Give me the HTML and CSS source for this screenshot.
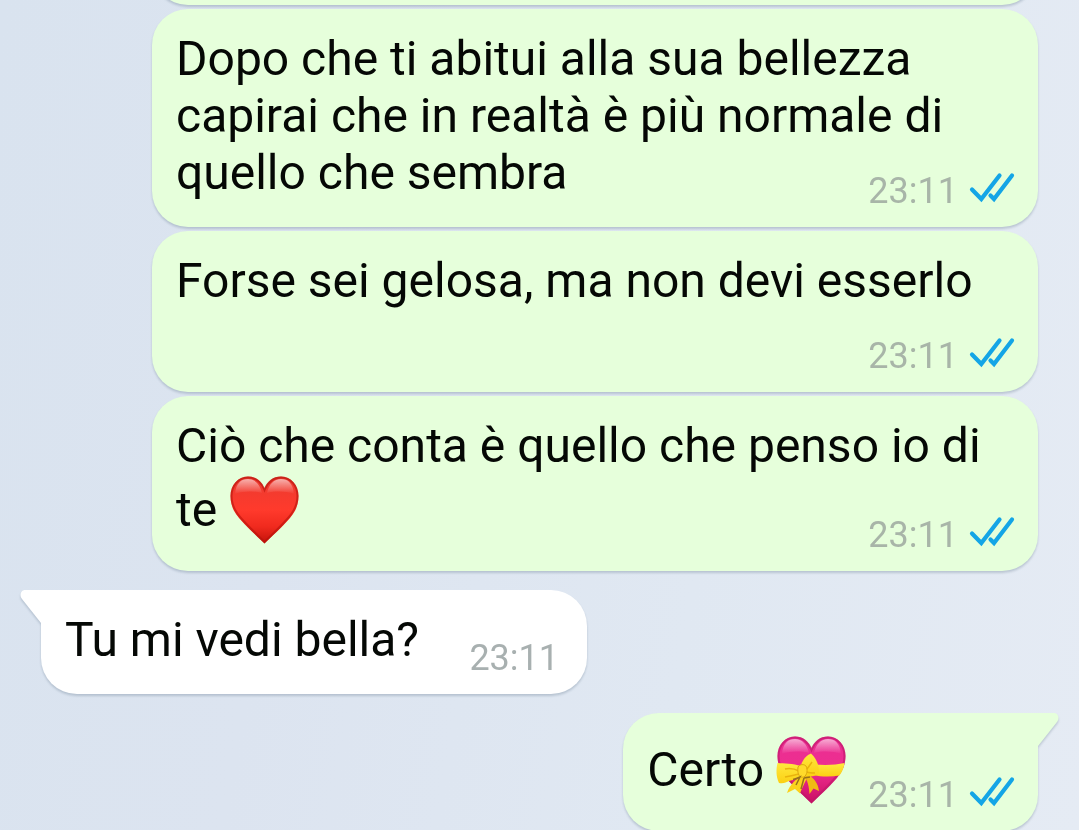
FILE: index.html
```html
<!DOCTYPE html>
<html lang="it">
  <head>
    <meta charset="UTF-8" />
    <meta name="viewport" content="width=device-width, initial-scale=1.0" />
    <title>Chat</title>
    <link rel="stylesheet" href="styles.css">
  </head>
  <body>
    <!-- shared shapes -->
    <svg class="defs" aria-hidden="true">
      <symbol id="ticks" viewBox="0 0 46 34">
        <path d="M3 18.5 L12.3 28 L30.500 4.500 M21.500 24.500 L25 28 L43 4.500" fill="none" stroke="#14a5e6" stroke-width="4.200" stroke-linecap="round" stroke-linejoin="miter" />
      </symbol>
      <symbol id="heart" viewBox="0 0 71 71">
        <path d="M35.500 69.500 C29 63 19 54.500 10 44 C4 37 1.500 30 1.500 22 C1.500 11 9 2.500 19 2.500 C26.500 2.500 32.500 7 35.500 14.500 C38.500 7 44.500 2.500 52 2.500 C62 2.500 69.500 11 69.500 22 C69.500 30 67 37 61 44 C52 54.500 42 63 35.500 69.500 Z" />
      </symbol>
      <symbol id="heartLine" viewBox="0 0 71 71">
        <path d="M35.500 68 C29 61.500 20 53.500 11 43 C5 36 2.500 30 2.500 22 C2.500 11.500 9.500 3.500 19 3.500 C26.500 3.500 32.500 8.500 35.500 16 C38.500 8.500 44.500 3.500 52 3.500 C61.500 3.500 68.500 11.500 68.500 22 C68.500 30 66 36 60 43 C51 53.500 42 61.500 35.500 68 Z" fill="none" stroke-opacity="0.6" stroke-width="2" />
      </symbol>
      <linearGradient id="red" x1="0" y1="0" x2="0" y2="1">
        <stop offset="0" stop-color="#ea3b31" />
        <stop offset="0.5" stop-color="#ff3a2c" />
        <stop offset="0.75" stop-color="#f02a1e" />
        <stop offset="1" stop-color="#c2120a" />
      </linearGradient>
      <linearGradient id="pink" x1="0" y1="0" x2="0" y2="1">
        <stop offset="0" stop-color="#ea2f92" />
        <stop offset="0.5" stop-color="#ee2d90" />
        <stop offset="1" stop-color="#c90e62" />
      </linearGradient>
      <linearGradient id="gold" x1="0" y1="0" x2="0" y2="1">
        <stop offset="0" stop-color="#ffe83e" />
        <stop offset="1" stop-color="#fbd013" />
      </linearGradient>
      <linearGradient id="shineFill" x1="0" y1="0" x2="0" y2="1">
        <stop offset="0" stop-color="#fff" stop-opacity="0.6" />
        <stop offset="1" stop-color="#fff" stop-opacity="0" />
      </linearGradient>
      <symbol id="shine" viewBox="0 0 71 71">
        <path d="M6 20 C7 9 12 5 19 5 C26 5 31 10 33 19 C25 17 14 17 6 20 Z" fill="url(#shineFill)" />
        <path d="M65 20 C64 9 59 5 52 5 C45 5 40 10 38 19 C46 17 57 17 65 20 Z" fill="url(#shineFill)" />
      </symbol>
    </svg>

    <main class="chat">
      <div class="bubble out previous"></div>

      <div class="bubble out">
        <p class="text">Dopo che ti abitui alla sua bellezza capirai che in realtà è più normale di quello che sembra</p>
        <div class="meta"><time>23:11</time><svg class="ticks"><use href="#ticks" /></svg></div>
      </div>

      <div class="bubble out">
        <p class="text">Forse sei gelosa, ma non devi esserlo</p>
        <div class="meta"><time>23:11</time><svg class="ticks"><use href="#ticks" /></svg></div>
      </div>

      <div class="bubble out">
        <p class="text">Ciò che conta è quello che penso io di te <svg class="emoji" viewBox="0 0 71 71" role="img" aria-label="cuore rosso">
            <use href="#heart" fill="url(#red)" />
            <use href="#heartLine" stroke="#b5120c" />
            <use href="#shine" />
          </svg></p>
        <div class="meta"><time>23:11</time><svg class="ticks"><use href="#ticks" /></svg></div>
      </div>

      <div class="bubble in tailed">
        <svg class="tail" viewBox="0 0 22 34"><path d="M22 0 H5 C1 0 -1 5 2 9 L21 33 H22 Z" fill="#fff" /></svg>
        <p class="text">Tu mi vedi bella?</p>
        <div class="meta"><time>23:11</time></div>
      </div>

      <div class="bubble out tailed">
        <svg class="tail" viewBox="0 0 22 34"><path d="M0 0 H17 C21 0 23 5 20 9 L1 33 H0 Z" fill="#e6ffdb" /></svg>
        <p class="text">Certo <svg class="emoji" viewBox="0 0 71 71" role="img" aria-label="cuore con fiocco">
            <use href="#heart" fill="url(#pink)" />
            <use href="#heartLine" stroke="#bd1768" />
            <use href="#shine" />
            <!-- ribbon, tails, then the bow on top -->
            <path d="M38 30.500 C50 31.500 60 31 68.500 29 C68 34 66 38 63.500 41.500 C55 43 45 43 38 41 Z" fill="url(#gold)" />
            <path d="M25 41 C20 46 14 50 11 59 L19 55 L24 59.500 C26 54 29 48 32 42 Z" fill="#fbd21c" />
            <path d="M27 41 C32 46 33 53 33.500 60 L37.500 54.500 L43 57 C42 49 38 44 31 40 Z" fill="#f0bb14" />
            <path d="M25 32 C17 29.500 8 29.500 1.500 29 C0 36 0 42 3 49 C8 50 10 48 13 47 C18 46 22 44 26 41 Z" fill="url(#gold)" />
            <path d="M25 31 C27 25 31 21 35 19.500 C40 24 43.500 31 43 40 C38 43 32 43 27 41 Z" fill="url(#gold)" />
            <path d="M9 35 C14 34 19 35 23 37 M9 43 C15 42 19 41 23 40 M36 28 C34 31 32 34 30 36 M39 39 C36 39 33 39 31 38" fill="none" stroke="#e9b30e" stroke-width="1.500" />
            <path d="M22 33 C24 30 28 30 30 32 C32 36 31 41 28 43 C24 44 21 41 22 33 Z" fill="#ffda2b" stroke="#dca70e" />
            <path d="M17 45.500 C20 45 22 44 24 43 L20 51 M28 44 L34 43 M28 44 L25 55" fill="none" stroke="#98701c" stroke-width="1.500" />
          </svg></p>
        <div class="meta"><time>23:11</time><svg class="ticks"><use href="#ticks" /></svg></div>
      </div>
    </main>
  </body>
</html>
```

FILE: styles.css
```css
* {
  box-sizing: border-box;
}
body {
  margin: 0;
  min-height: 100vh;
  overflow: hidden;
  font-family: Roboto, "Liberation Sans", sans-serif;
  color: #050805;
  background: linear-gradient(100deg, #d9e3ef 0%, #dce4f0 30%, #e0e8f2 65%, #e5ebf4 100%);
}
.defs {
  position: absolute;
  width: 0;
  height: 0;
}
.chat {
  display: flex;
  flex-direction: column;
  gap: 4px;
  height: 100vh;
  padding: 0 41px;
}
/* text and time share one cell, the time sits in its bottom corner */
.bubble {
  position: relative;
  display: grid;
  flex-shrink: 0;
  padding: 21px 24px 26px;
  border-radius: 36px;
  filter: drop-shadow(0 2px 1px rgba(110, 130, 150, 0.35));
}
.out {
  align-self: flex-end;
  margin-left: 111px;
  background-color: #e6ffdb;
}
.in {
  align-self: flex-start;
  margin-right: 111px;
  padding-right: 30px;
  background-color: #fff;
}
/* end of the message above, scrolled out of view */
.previous {
  align-self: stretch;
  height: 104px;
  margin-top: -99px;
}
.tailed {
  margin-top: 15px;
}
.in.tailed {
  border-top-left-radius: 0;
}
.out.tailed {
  border-top-right-radius: 0;
}
.tail {
  position: absolute;
  top: 0;
  width: 22px;
  height: 34px;
}
.in .tail {
  left: -21px;
}
.out .tail {
  right: -21px;
}
.text {
  grid-area: 1 / 1;
  margin: 0;
  font-size: 48px;
  line-height: 57px;
}
/* keeps the last line clear of the time */
.text::after {
  content: "";
  display: inline-block;
  width: 167px;
  height: 1px;
}
.in .text::after {
  width: 138px;
}
.emoji {
  width: 71px;
  height: 71px;
  vertical-align: -19px;
}
.meta {
  grid-area: 1 / 1;
  align-self: end;
  justify-self: end;
  display: flex;
  align-items: center;
  gap: 11px;
  margin-bottom: -13px;
  font-size: 36px;
  line-height: 46px;
  color: #a8b0b0;
}
.in .meta {
  margin-right: -2px;
}
.out .meta {
  color: #a8b5a8;
}
.ticks {
  width: 46px;
  height: 34px;
  margin: 0 -1px 6px 0;
}
```
